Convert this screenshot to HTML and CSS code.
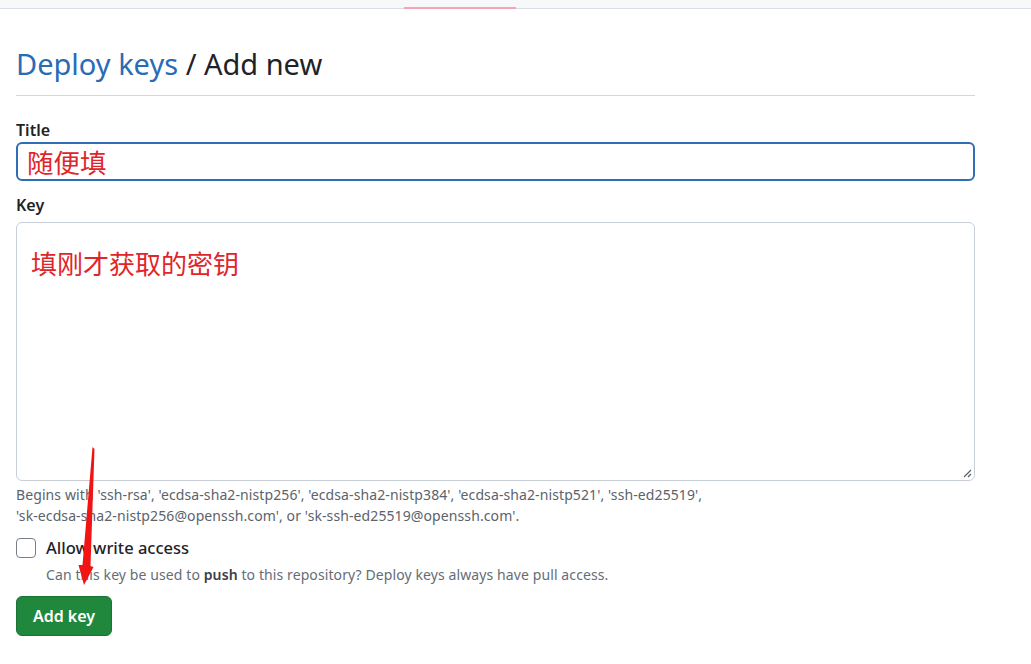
FILE: index.html
```html
<!DOCTYPE html>
<html lang="en">
<head>
<meta charset="utf-8">
<title>Deploy keys / Add new</title>
<link rel="stylesheet" href="styles.css">
</head>
<body>
<div class="topbar"><div class="tab-underline"></div></div>
<main class="page">
  <h1 class="heading"><a class="crumb" href="#">Deploy keys</a> / Add new</h1>
  <form class="form">
    <label class="label" for="title">Title</label>
    <div class="input focused" id="title"><span class="hint">随便填</span></div>
    <label class="label key-label" for="key">Key</label>
    <div class="textarea" id="key"><span class="hint key-hint">填刚才获取的密钥</span>
      <svg class="grip" width="10" height="10" viewBox="0 0 10 10"><path d="M9 2 L2 9 M9 6 L6 9" stroke="#57606a" stroke-width="1.2" fill="none"/></svg>
    </div>
    <p class="note">Begins with 'ssh-rsa', 'ecdsa-sha2-nistp256', 'ecdsa-sha2-nistp384', 'ecdsa-sha2-nistp521', 'ssh-ed25519',<br>'sk-ecdsa-sha2-nistp256@openssh.com', or 'sk-ssh-ed25519@openssh.com'.</p>
    <div class="check-row">
      <span class="checkbox"></span>
      <span class="check-label">Allow write access</span>
    </div>
    <p class="check-desc">Can this key be used to <strong>push</strong> to this repository? Deploy keys always have pull access.</p>
    <button type="button" class="btn">Add key</button>
  </form>
</main>
<svg class="arrow" width="1031" height="664" viewBox="0 0 1031 664">
  <polygon points="92.5,447 94.5,449 90.5,566 93.5,567 84,585 78.5,565 82.5,565" fill="#f01414"/>
</svg>
</body>
</html>
```
FILE: styles.css
```css
html, body {
  margin: 0;
  padding: 0;
  background: #ffffff;
}
body {
  font-family: "Noto Sans", "Open Sans", "Noto Sans CJK SC", sans-serif;
  color: #1f2328;
  width: 1031px;
  height: 664px;
  overflow: hidden;
  position: relative;
}
.topbar {
  height: 8px;
  background: #f6f8fa;
  border-bottom: 1px solid #d8dee4;
  display: flex;
  align-items: flex-end;
}
.tab-underline {
  margin-left: 404px;
  width: 112px;
  height: 2px;
  background: #f7a3b8;
  margin-bottom: -1px;
}
.page {
  padding: 0 56px 0 16px;
}
.heading {
  margin: 0;
  padding-top: 37px;
  padding-bottom: 13px;
  font-size: 29px;
  font-weight: 400;
  line-height: 36px;
  color: #1f2328;
  border-bottom: 1px solid #d0d7de;
}
.crumb {
  color: #2a6bb5;
  text-decoration: none;
}
.form {
  display: flex;
  flex-direction: column;
  align-items: flex-start;
}
.label {
  margin-top: 23px;
  font-size: 16px;
  font-weight: 600;
  line-height: 22px;
}
.key-label {
  margin-top: 13px;
}
.input {
  box-sizing: border-box;
  width: 959px;
  height: 39px;
  margin-top: 1px;
  border: 2px solid #2f6db5;
  border-radius: 6px;
  padding: 0 9px;
  display: flex;
  align-items: center;
}
.hint {
  color: #e0262b;
  font-family: "Noto Sans CJK SC", sans-serif;
  font-size: 26.5px;
  line-height: 30px;
}
.key-hint {
  font-size: 26px;
}
.textarea {
  box-sizing: border-box;
  width: 959px;
  height: 259px;
  margin-top: 6px;
  border: 1px solid #c9cfd6;
  border-radius: 6px;
  padding: 25px 14px;
  position: relative;
}
.grip {
  position: absolute;
  right: 2px;
  bottom: 2px;
}
.note {
  margin: 3px 0 0;
  font-size: 14px;
  letter-spacing: 0.1px;
  line-height: 21px;
  color: #5b636b;
}
.check-row {
  display: flex;
  align-items: center;
  gap: 10px;
  margin-top: 11px;
}
.checkbox {
  box-sizing: border-box;
  width: 20px;
  height: 20px;
  border: 1px solid #7a8088;
  border-radius: 4px;
  background: #fff;
}
.check-label {
  font-size: 16.5px;
  font-weight: 500;
  line-height: 22px;
}
.check-desc {
  margin: 6px 0 0 30px;
  font-size: 14px;
  letter-spacing: 0.1px;
  line-height: 20px;
  color: #656d76;
}
.check-desc strong {
  color: #3a4048;
  font-weight: 600;
}
.btn {
  margin-top: 11px;
  width: 96px;
  height: 40px;
  border: 1px solid #1b7434;
  border-radius: 6px;
  background: #1f883d;
  color: #ffffff;
  font-family: inherit;
  font-size: 16px;
  font-weight: 600;
  padding: 0;
  cursor: pointer;
}
.arrow {
  position: absolute;
  left: 0;
  top: 0;
  pointer-events: none;
}
```
